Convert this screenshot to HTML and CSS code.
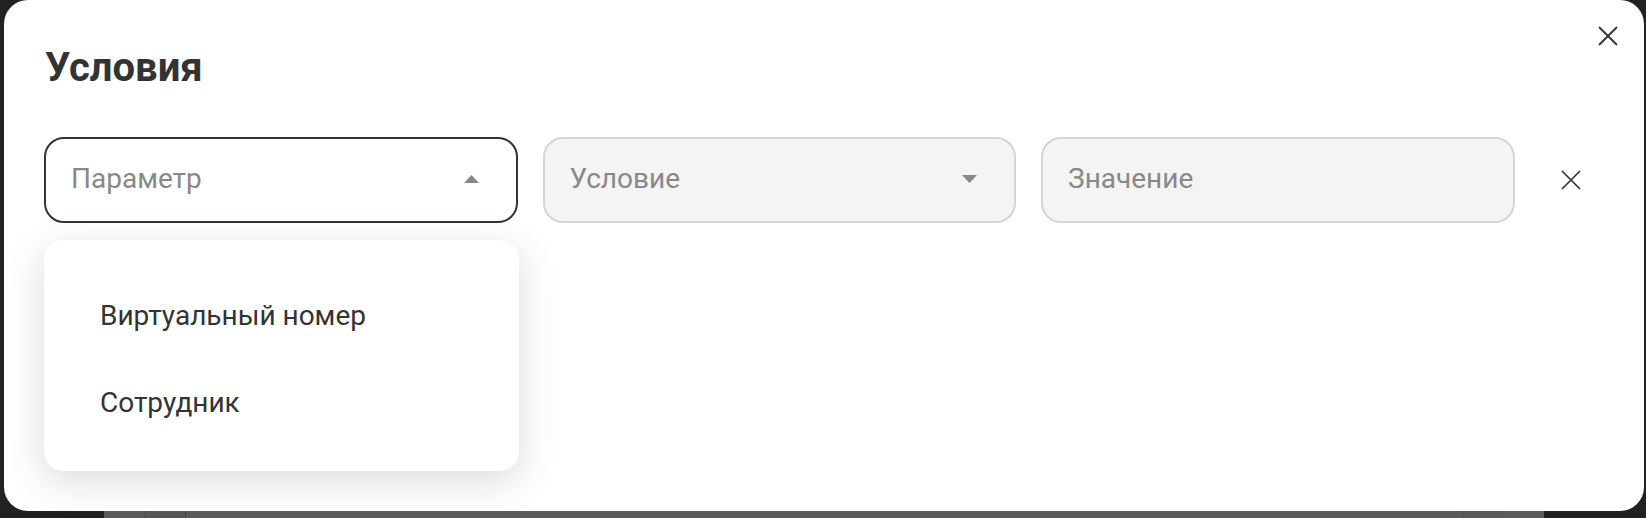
FILE: index.html
```html
<!DOCTYPE html>
<html lang="ru">
<head>
<meta charset="utf-8">
<title>Условия</title>
<link rel="stylesheet" href="styles.css">
</head>
<body>
<div class="modal">
  <button class="modal-close" aria-label="Закрыть">
    <svg viewBox="0 0 20 20" width="20" height="20"><path d="M1 1L19 19M19 1L1 19" stroke="#3a3a3a" stroke-width="2" fill="none"/></svg>
  </button>
  <h1 class="title">Условия</h1>
  <div class="row">
    <div class="select">
      <div class="field field-active">
        <span class="placeholder">Параметр</span>
        <svg class="caret" viewBox="0 0 15 8" width="15" height="8"><polygon points="7.5,0 15,8 0,8" fill="#888"/></svg>
      </div>
      <ul class="menu">
        <li class="menu-item">Виртуальный номер</li>
        <li class="menu-item">Сотрудник</li>
      </ul>
    </div>
    <div class="field field-idle">
      <span class="placeholder">Условие</span>
      <svg class="caret" viewBox="0 0 15 8" width="15" height="8"><polygon points="0,0 15,0 7.5,8" fill="#888"/></svg>
    </div>
    <div class="field field-idle">
      <span class="placeholder">Значение</span>
    </div>
    <button class="row-remove" aria-label="Удалить">
      <svg viewBox="0 0 20 20" width="20" height="20"><path d="M1 1L19 19M19 1L1 19" stroke="#333" stroke-width="1.7" fill="none"/></svg>
    </button>
  </div>
</div>
<div class="backdrop-strip">
  <div class="strip-dark strip-left"></div>
  <div class="strip-grey strip-a"></div>
  <div class="strip-grey strip-b"></div>
  <div class="strip-grey strip-c"></div>
  <div class="strip-grey strip-d"></div>
  <div class="strip-grey strip-e"></div>
  <div class="strip-dark strip-right"></div>
</div>
</body>
</html>
```
FILE: styles.css
```css
* { box-sizing: border-box; }

html, body {
  margin: 0;
  padding: 0;
}

body {
  width: 1646px;
  height: 518px;
  overflow: hidden;
  background: #222222;
  font-family: Roboto, "Liberation Sans", Arial, sans-serif;
  display: flex;
  flex-direction: column;
}

.modal {
  position: relative;
  margin-left: 4px;
  width: 1640px;
  height: 511px;
  flex: none;
  background: #ffffff;
  border-radius: 24px;
  padding: 44px 40px 0 40px;
}

.modal-close {
  position: absolute;
  top: 26px;
  right: 26px;
  width: 20px;
  height: 20px;
  padding: 0;
  border: 0;
  background: none;
  display: flex;
}

.title {
  margin: 0;
  font-size: 40px;
  line-height: 48px;
  font-weight: 700;
  color: #333333;
  padding-left: 1px;
}

.row {
  margin-top: 44.5px;
  display: flex;
  align-items: center;
  gap: 25px;
}

.select {
  position: relative;
  width: 473.5px;
  flex: none;
}

.field {
  width: 473.5px;
  height: 86px;
  flex: none;
  border-radius: 20px;
  display: flex;
  align-items: center;
  justify-content: space-between;
  padding: 0 37px 3px 25px;
}

.field-active {
  background: #ffffff;
  border: 2px solid #333333;
}

.field-idle {
  background: #f4f4f4;
  border: 2px solid #d5d5d5;
}

.placeholder {
  font-size: 28px;
  color: #888888;
}

.caret {
  display: block;
  flex: none;
  margin-top: 2px;
}

.menu {
  position: absolute;
  left: 0;
  top: calc(100% + 17px);
  width: 475px;
  margin: 0;
  padding: 32px 0 24px 0;
  list-style: none;
  background: #ffffff;
  border-radius: 20px;
  box-shadow: 0 10px 40px rgba(0, 0, 0, 0.15);
}

.menu-item {
  height: 87.5px;
  display: flex;
  align-items: center;
  padding-left: 56px;
  font-size: 28px;
  color: #333333;
}

.row-remove {
  margin-left: 11.5px;
  width: 40px;
  height: 40px;
  padding: 0;
  border: 0;
  background: none;
  display: flex;
  align-items: center;
  justify-content: center;
}

.backdrop-strip {
  flex: 1;
  display: flex;
}

.strip-dark { background: #212121; }
.strip-left { width: 104px; }
.strip-right { flex: 1; }
.strip-grey { background: #5b5b5b; }
.strip-a { width: 40px; }
.strip-b { width: 41px; background: #575757; border-left: 1px solid #4e4e4e; }
.strip-c { width: 1278px; background: #5a5a5a; border-left: 1px solid #444; }
.strip-d { width: 41px; background: #595959; border-left: 1px solid #505050; }
.strip-e { width: 40px; background: #5c5c5c; }
```
